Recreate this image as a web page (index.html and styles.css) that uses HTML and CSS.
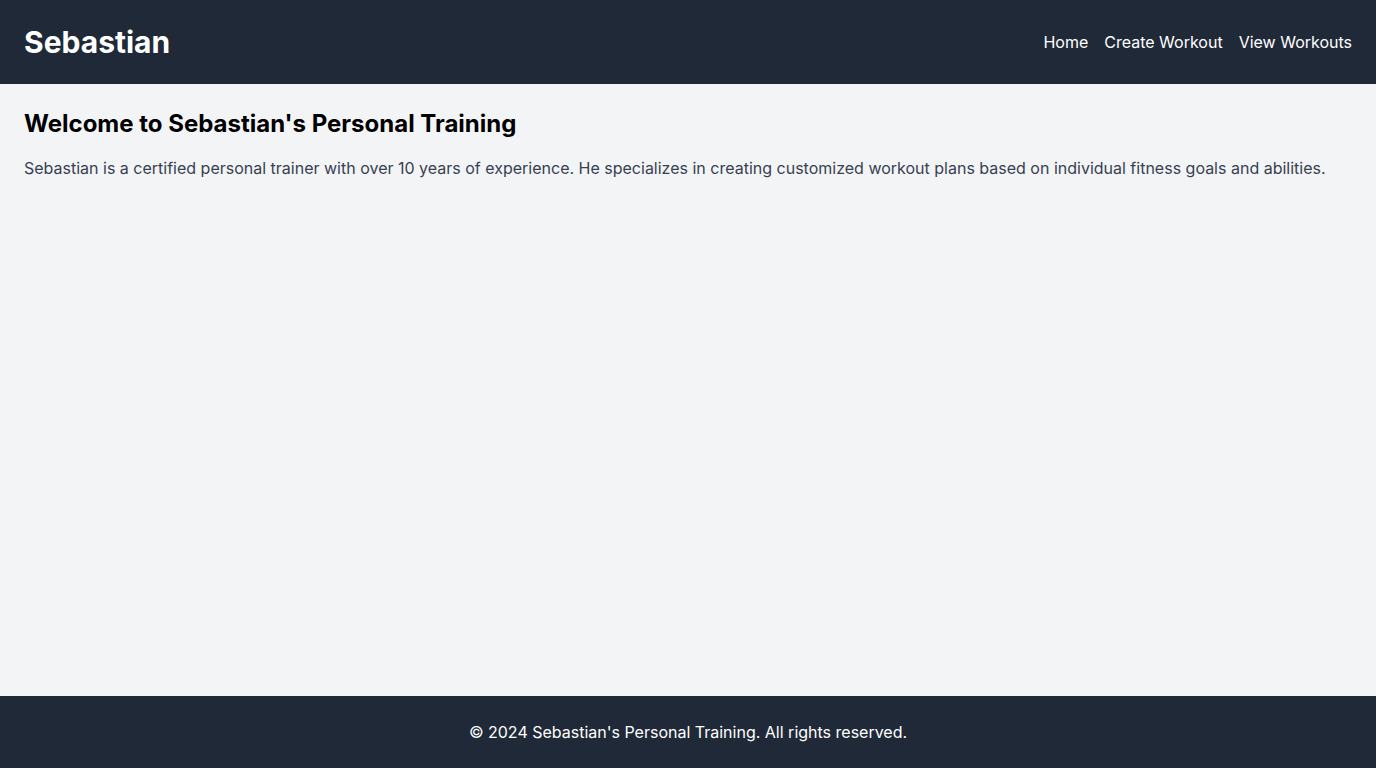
FILE: index.html
```html
<!DOCTYPE html>
<html lang="en">
<head>
<meta charset="utf-8">
<title>Sebastian's Personal Training</title>
<link rel="stylesheet" href="styles.css">
</head>
<body>
<div class="page">
  <header class="header">
    <h1 class="brand">Sebastian</h1>
    <nav class="nav">
      <a href="#">Home</a>
      <a href="#">Create Workout</a>
      <a href="#">View Workouts</a>
    </nav>
  </header>
  <main class="main">
    <h2 class="title">Welcome to Sebastian's Personal Training</h2>
    <p class="intro">Sebastian is a certified personal trainer with over 10 years of experience. He specializes in creating customized workout plans based on individual fitness goals and abilities.</p>
  </main>
  <footer class="footer">
    <p>&copy; 2024 Sebastian's Personal Training. All rights reserved.</p>
  </footer>
</div>
</body>
</html>
```
FILE: styles.css
```css
* { box-sizing: border-box; }
html, body { margin: 0; padding: 0; }
body {
  font-family: Inter, "Noto Sans", sans-serif;
  font-size: 16px;
  line-height: 24px;
  background: #f3f4f6;
}
.page {
  min-height: 100vh;
  display: flex;
  flex-direction: column;
}
.header {
  background: #1f2937;
  color: #fff;
  padding: 24px;
  display: flex;
  justify-content: space-between;
  align-items: center;
}
.brand {
  margin: 0;
  font-size: 30px;
  line-height: 36px;
  font-weight: 700;
}
.nav {
  display: flex;
  gap: 16px;
}
.nav a {
  color: #fff;
  text-decoration: none;
}
.main {
  flex: 1;
  padding: 24px;
}
.title {
  margin: 0 0 16px;
  font-size: 24px;
  line-height: 32px;
  font-weight: 700;
  color: #000;
}
.intro {
  margin: 0;
  color: #374151;
}
.footer {
  background: #1f2937;
  color: #fff;
  padding: 24px;
  text-align: center;
}
.footer p { margin: 0; }
```
